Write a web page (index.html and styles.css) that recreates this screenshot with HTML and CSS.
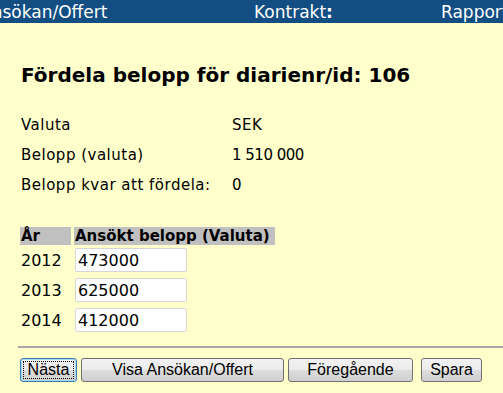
FILE: index.html
```html
<!DOCTYPE html>
<html lang="sv">
<head>
    <meta charset="UTF-8">
    <title>Fördela belopp</title>
    <link rel="stylesheet" href="styles.css">
</head>
<body>
    <div class="topbar">
        <span class="tab tab-first">Ansökan/Offert</span>
        <span class="tab tab-mid">Kontrakt<b>:</b></span>
        <span class="tab tab-last">Rapport</span>
    </div>

    <div class="content">
        <h1>Fördela belopp för diarienr/id: 106</h1>

        <div class="info">
            <div class="info-row"><span class="info-label">Valuta</span><span>SEK</span></div>
            <div class="info-row"><span class="info-label">Belopp (valuta)</span><span class="num">1 510 000</span></div>
            <div class="info-row"><span class="info-label">Belopp kvar att fördela:</span><span>0</span></div>
        </div>

        <table class="amounts">
            <tr>
                <th class="col-year">År</th>
                <th class="col-amount">Ansökt belopp (Valuta)</th>
            </tr>
            <tr>
                <td>2012</td>
                <td><input type="text" value="473000"></td>
            </tr>
            <tr>
                <td>2013</td>
                <td><input type="text" value="625000"></td>
            </tr>
            <tr>
                <td>2014</td>
                <td><input type="text" value="412000"></td>
            </tr>
        </table>

        <hr>

        <div class="buttons">
            <button class="btn btn-focus">Nästa</button>
            <button class="btn btn-wide">Visa Ansökan/Offert</button>
            <button class="btn btn-prev">Föregående</button>
            <button class="btn btn-save">Spara</button>
        </div>
    </div>
</body>
</html>
```

FILE: styles.css
```css
body {
    margin: 0;
    background-color: #ffffcc;
    font-family: "DejaVu Sans", Verdana, sans-serif;
    font-size: 15px;
    color: #000;
    overflow: hidden;
}
.topbar {
    background-color: #124e82;
    color: #fff;
    height: 23px;
    display: flex;
    align-items: center;
    font-size: 17px;
    white-space: nowrap;
    overflow: hidden;
}
.tab {
    flex-shrink: 0;
}
.tab-first {
    margin-left: -20px;
    width: 274px;
}
.tab-mid {
    width: 187px;
}
.content {
    padding: 0 0 0 20px;
}
h1 {
    font-size: 20px;
    font-weight: bold;
    margin: 40px 0 23px 1px;
}
.info {
    margin-left: 1px;
}
.info-row {
    display: flex;
    height: 30px;
    align-items: center;
    letter-spacing: 0.5px;
}
.info-label {
    width: 211px;
}
.num {
    letter-spacing: -0.5px;
}
.amounts {
    border-collapse: separate;
    border-spacing: 3px 0;
    margin: 27px 0 0 -3px;
}
.amounts th {
    background-color: #c0c0c0;
    text-align: left;
    padding: 0 1px;
    height: 18px;
    font-size: 15px;
    font-weight: bold;
    line-height: 18px;
}
.col-year {
    width: 49px;
}
.col-amount {
    width: 199px;
}
.amounts td {
    height: 30px;
    padding: 0 1px;
    font-size: 16px;
}
.amounts input {
    box-sizing: border-box;
    width: 112px;
    height: 24px;
    padding: 0 2px;
    border: 1px solid #d6d6d6;
    border-radius: 2px;
    background-color: #fff;
    font-family: "DejaVu Sans", Verdana, sans-serif;
    font-size: 16px;
    margin: 0;
}
hr {
    border: none;
    border-top: 2px solid #a8a8a8;
    margin: 11px 0 0 -2px;
    height: 0;
}
.buttons {
    display: flex;
    margin-top: 10px;
}
.btn {
    font-family: "Liberation Sans", Arial, sans-serif;
    font-size: 16px;
    height: 24px;
    padding: 0;
    margin-right: 4px;
    border: 1px solid #707070;
    border-radius: 3px;
    background: linear-gradient(#f2f2f2 0%, #ebebeb 50%, #dddddd 51%, #cfcfcf 100%);
    color: #000;
}
.btn-focus {
    width: 57px;
    border-color: #3c7fb1;
    box-shadow: inset 0 0 0 1px #a8d8eb;
    outline: 1px dotted #000;
    outline-offset: -4px;
}
.btn-wide {
    width: 203px;
}
.btn-prev {
    width: 125px;
    margin-right: 8px;
}
.btn-save {
    width: 61px;
}
```
